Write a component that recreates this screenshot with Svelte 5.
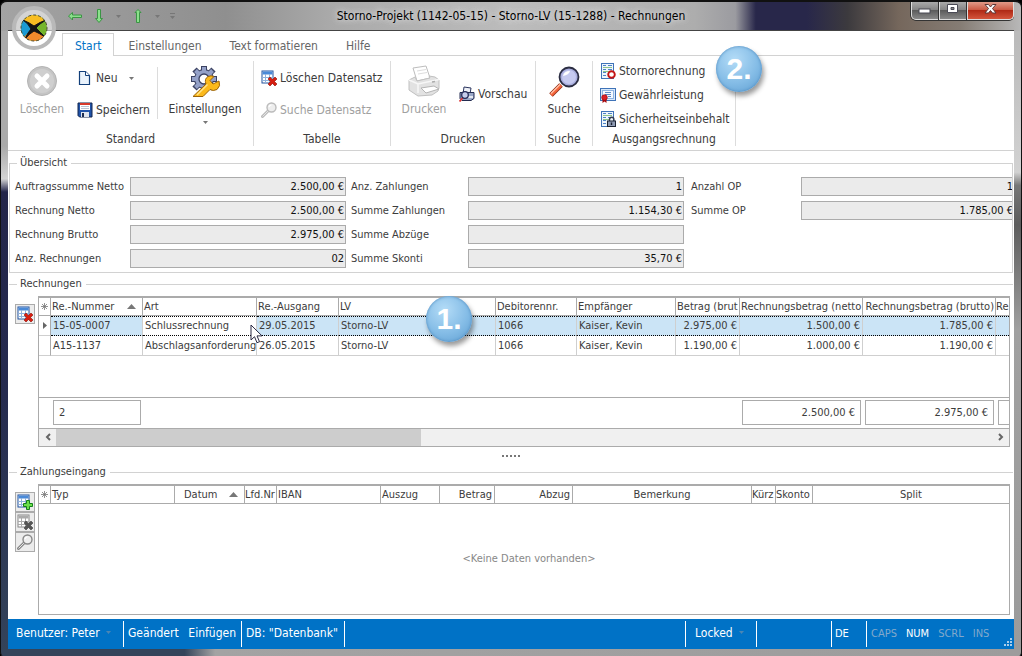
<script>
  let activeTab = 'Start';
  let selectedRow = 0;

  const tabs = ['Start', 'Einstellungen', 'Text formatieren', 'Hilfe'];

  // column by column, the last one is shorter
  const overview = [
    [
      { label: 'Auftragssumme Netto', value: '2.500,00 €' },
      { label: 'Rechnung Netto', value: '2.500,00 €' },
      { label: 'Rechnung Brutto', value: '2.975,00 €' },
      { label: 'Anz. Rechnungen', value: '02' },
    ],
    [
      { label: 'Anz. Zahlungen', value: '1' },
      { label: 'Summe Zahlungen', value: '1.154,30 €' },
      { label: 'Summe Abzüge', value: '' },
      { label: 'Summe Skonti', value: '35,70 €' },
    ],
    [
      { label: 'Anzahl OP', value: '1' },
      { label: 'Summe OP', value: '1.785,00 €' },
    ],
  ];

  const invoiceColumns = [
    { title: 'Re.-Nummer', cls: 'number', sorted: true, total: '2' },
    { title: 'Art', cls: 'kind' },
    { title: 'Re.-Ausgang', cls: 'date' },
    { title: 'LV', cls: 'lv' },
    { title: 'Debitorennr.', cls: 'debitor' },
    { title: 'Empfänger', cls: 'receiver' },
    { title: 'Betrag (brut', cls: 'amount', right: true },
    { title: 'Rechnungsbetrag (netto', cls: 'net', right: true, total: '2.500,00 €' },
    { title: 'Rechnungsbetrag (brutto)', cls: 'gross', right: true, total: '2.975,00 €' },
    { title: 'Re', cls: 'rest', total: ' ' },
  ];

  const invoices = [
    ['15-05-0007', 'Schlussrechnung', '29.05.2015', 'Storno-LV', '1066', 'Kaiser, Kevin', '2.975,00 €', '1.500,00 €', '1.785,00 €', ''],
    ['A15-1137', 'Abschlagsanforderung', '26.05.2015', 'Storno-LV', '1066', 'Kaiser, Kevin', '1.190,00 €', '1.000,00 €', '1.190,00 €', ''],
  ];

  const paymentColumns = [
    { title: 'Typ', cls: 'typ' },
    { title: 'Datum', cls: 'datum', center: true, sorted: true },
    { title: 'Lfd.Nr', cls: 'lfd' },
    { title: 'IBAN', cls: 'iban' },
    { title: 'Auszug', cls: 'auszug' },
    { title: 'Betrag', cls: 'betrag', right: true },
    { title: 'Abzug', cls: 'abzug', right: true },
    { title: 'Bemerkung', cls: 'bemerkung', center: true },
    { title: 'Kürz', cls: 'kuerzel' },
    { title: 'Skonto', cls: 'skonto' },
    { title: 'Split', cls: 'split', center: true },
  ];
</script>

{#snippet arrow()}
  <svg class="arrow" width="5" height="3" viewBox="0 0 5 3"><path d="M0 0h5L2.500 3z" fill="currentColor" /></svg>
{/snippet}

{#snippet star()}
  <svg width="7" height="7" viewBox="0 0 7 7"><path d="M3.500 0v7M0 3.500h7M1 1l5 5M6 1L1 6" stroke="#777" stroke-width=".8" /></svg>
{/snippet}

{#snippet tableIcon(kind)}
  <svg width="16" height="16" viewBox="0 0 16 16">
    <rect x="1" y="1" width="11" height="12" fill="#fff" stroke={kind === 'off' ? '#888' : '#23539e'} />
    <rect x="1.500" y="1.500" width="10" height="3" fill={kind === 'off' ? '#aaa' : '#4a8ad8'} />
    <path d="M1 7.500h11M1 10.500h11M4.500 4v9M8.500 4v9" stroke={kind === 'off' ? '#aaa' : '#8fb2dc'} fill="none" />
    {#if kind === 'add'}
      <path d="M9.500 6.500h3v3h3v3h-3v3h-3v-3h-3v-3h3z" fill="#6be04a" stroke="#14801a" />
    {:else}
      <path d="M7 9l2-2 2.500 2.500L14 7l2 2-2.500 2.500L16 14l-2 2-2.500-2.500L9 16l-2-2 2.500-2.500z" fill={kind === 'off' ? '#555' : '#d81e10'} stroke={kind === 'off' ? '#444' : '#8c1008'} stroke-width=".6" />
    {/if}
  </svg>
{/snippet}

{#snippet smallLens(color)}
  <svg width="16" height="16" viewBox="0 0 16 16">
    <path d="M7.500 8.500l-6 6" stroke={color} stroke-width="3" stroke-linecap="round" />
    <path d="M7 9l-5.500 5.500" stroke="#e4e4e4" stroke-width="1" />
    <circle cx="10.500" cy="5.500" r="4.500" fill="#eee" stroke={color} stroke-width="1.400" />
    <path d="M8 5q.5-2 2.500-2" stroke="#fff" stroke-width="1.200" fill="none" />
  </svg>
{/snippet}

{#snippet docIcon(kind)}
  <svg width="16" height="16" viewBox="0 0 16 16">
    {#if kind === 'warranty'}
      <rect x=".5" y="1.500" width="15" height="12" fill="#d9e9fa" stroke="#3f73b8" />
      <rect x="2.500" y="3.500" width="11" height="8" fill="#f5faff" stroke="#8fb5e2" />
      <path d="M5 5.500h6M5 7.500h6M8 9.500h3" stroke="#5b8bc9" />
      <path d="M2.500 11v5l2-1.500 2 1.500v-5z" fill="#a80c12" />
      <circle cx="4.500" cy="10.500" r="2.800" fill="#d8222a" stroke="#900" stroke-width=".6" />
    {:else}
      <rect x="1.500" y=".5" width="12" height="15" fill="#eef6fd" stroke="#3f73b8" />
      <path d="M3 2.500h3M8 2.500h4M3 6.500h3M8 6.500h4M3 9.500h3M3 12.500h3" stroke="#4e83c5" stroke-width="1" />
      <path d="M3 4.500h9M3 8.500h7" stroke="#8fc48a" stroke-width="1" />
      {#if kind === 'storno'}
        <circle cx="11.500" cy="11.500" r="3.300" fill="#fff" stroke="#c41414" stroke-width="1.900" />
      {:else}
        <path d="M9.500 10V8.500a2.200 2.200 0 0 1 4.400 0V10" fill="none" stroke="#333d52" stroke-width="1.400" />
        <rect x="7.500" y="10" width="8" height="5.500" fill="#8e9ab2" stroke="#1c2333" />
        <path d="M11.500 11.500v2.500" stroke="#1c2333" stroke-width="1.400" />
      {/if}
    {/if}
  </svg>
{/snippet}

{#snippet columnTitle(col)}
  <th class={col.cls} class:right={col.right} class:center={col.center} class:sorted={col.sorted}>
    {#if col.sorted}
      <span class="sort">{col.title}<svg width="9" height="5" viewBox="0 0 9 5"><path d="M4.500 0L9 5H0z" fill="#777" /></svg></span>
    {:else}
      {col.title}
    {/if}
  </th>
{/snippet}

<div class="window">
  <header class="titlebar">
    <div class="quick">
      <button aria-label="Zurück">
        <svg width="14" height="14" viewBox="0 0 14 14"><path d="M.5 7l4-3.500V6h9v2.500h-9v2.500z" fill="#8be08b" stroke="#3b9444" /></svg>
      </button>
      <button aria-label="Nach unten">
        <svg width="14" height="14" viewBox="0 0 14 14"><path d="M7 13.500L3.500 9.500h2V.5h3v9h2z" fill="#8be08b" stroke="#3b9444" /></svg>
      </button>
      {@render arrow()}
      <button aria-label="Nach oben">
        <svg width="14" height="14" viewBox="0 0 14 14"><path d="M7 .5L10 3.500H8.500v10h-3v-10H4z" fill="#8be08b" stroke="#3b9444" /></svg>
      </button>
      {@render arrow()}
      <svg class="arrow" width="5" height="6" viewBox="0 0 5 6"><path d="M0 0h5v1H0zM0 3h5L2.500 6z" fill="currentColor" /></svg>
    </div>
    <h1>Storno-Projekt (1142-05-15) - Storno-LV (15-1288) - Rechnungen</h1>
    <div class="controls">
      <button aria-label="Minimieren">
        <svg width="13" height="12" viewBox="0 0 13 12"><rect x="1" y="6" width="11" height="4" fill="#fff" stroke="#4a4a55" /></svg>
      </button>
      <button aria-label="Maximieren">
        <svg width="13" height="12" viewBox="0 0 13 12"><path d="M1.500 1.500h10v8h-10zM5 4.500v2h3v-2z" fill="#fff" fill-rule="evenodd" stroke="#4a4a55" /></svg>
      </button>
      <button class="close" aria-label="Schließen">
        <svg width="13" height="12" viewBox="0 0 13 12"><path d="M1 1.500h3.500L6.500 4l2-2.500H12L8.500 5.500 12 10H8.500l-2-2.500-2 2.500H1l3.500-4.500z" fill="#fff" stroke="#5c3838" /></svg>
      </button>
    </div>
    <button class="orb" aria-label="Menü">
      <svg width="46" height="46" viewBox="0 0 46 46">
        <circle cx="23" cy="23" r="20" fill="#fff" fill-opacity=".55" stroke="#b9b9b9" stroke-width="4" />
        <clipPath id="ball"><circle cx="23" cy="23" r="13" /></clipPath>
        <g clip-path="url(#ball)">
          <rect x="10" y="10" width="26" height="26" fill="#75b52b" />
          <path d="M12 8h21v7L22 23 12 15z" fill="#f8bd22" />
          <path d="M9 14l4 1 9 8-9 9-4 1z" fill="#1c9ad2" />
          <path d="M13 32l9-9 13 9v6H12z" fill="#f28a2c" />
          <path d="M12 15q7 3 11 6 6-4 12-6-7 4-10 8 5 5 9 9-6-4-11-6-5 3-9 8 3-7 6-10-3-6-8-9z" fill="#151515" stroke="#151515" stroke-width="1" />
        </g>
        <circle cx="23" cy="23" r="13" fill="none" stroke="#4b4b33" stroke-width="1" stroke-dasharray="3 2" />
      </svg>
    </button>
  </header>

  <div class="client">
    <nav class="tabs">
      {#each tabs as tab}
        <button class:active={tab === activeTab} on:click={() => (activeTab = tab)}>{tab}</button>
      {/each}
    </nav>

    <div class="ribbon">
      <section class="group standard">
        <div class="tools">
          <button class="large" disabled>
            <svg width="32" height="32" viewBox="0 0 32 32">
              <circle cx="16" cy="16" r="14.500" fill="#c4c4c4" stroke="#b4b4b4" />
              <circle cx="16" cy="16" r="12" fill="#cfcfcf" />
              <path d="M11 11l10 10M21 11L11 21" stroke="#fff" stroke-width="5" stroke-linecap="round" />
            </svg>
            Löschen
          </button>
          <div class="stack">
            <button class="small">
              <svg width="16" height="16" viewBox="0 0 16 16">
                <path d="M2.500 1.500h6l4 4v9h-10z" fill="#eaf3fc" stroke="#123f7a" stroke-width="1.200" />
                <path d="M8.500 1.500v4h4" fill="#fff" stroke="#123f7a" />
              </svg>
              Neu <span class="drop">{@render arrow()}</span>
            </button>
            <button class="small">
              <svg width="16" height="16" viewBox="0 0 16 16">
                <path d="M1 1h14v14H2.500L1 13.500z" fill="#2053a8" stroke="#12264e" />
                <rect x="3" y="1" width="10" height="7" fill="#fff" />
                <rect x="3" y="1" width="10" height="2" fill="#d83a2c" />
                <path d="M4 4.500h8M4 6.500h8" stroke="#b9c4d4" />
                <rect x="4" y="10" width="8" height="5" fill="#dfe5ee" />
                <rect x="5" y="11" width="2" height="4" fill="#1b2c50" />
              </svg>
              Speichern
            </button>
          </div>
          <div class="divider"></div>
          <button class="large">
            <svg width="32" height="32" viewBox="0 0 32 32">
              <!-- teeth, each one a short thick spoke -->
              <g stroke="#3b4262" stroke-width="6">
                <path d="M15 1v26M2 14h26M5.500 4.500l19 19M24.500 4.500l-19 19" />
              </g>
              <circle cx="15" cy="14" r="10" fill="#3b4262" />
              <g stroke="#94a1c8" stroke-width="4">
                <path d="M15 2v24M3 14h24M6.500 5.500l17 17M23.500 5.500l-17 17" />
              </g>
              <circle cx="15" cy="14" r="9" fill="#94a1c8" />
              <circle cx="15" cy="14" r="5" fill="#fff" stroke="#3b4262" stroke-width="1.300" />
              <path d="M4 31.500L17 19q-2-5 2-7.500 3-1.500 6 0l-4 4 3 3.500 6-3q2 5-2 8.500-4 2-7 0l-7 7z" fill="#fbb91b" stroke="#9c6408" />
              <path d="M8 30l10.500-10.500" stroke="#ffe48a" stroke-width="1.500" />
            </svg>
            Einstellungen
            {@render arrow()}
          </button>
        </div>
        <h2>Standard</h2>
      </section>

      <section class="group tabelle">
        <div class="tools">
          <div class="stack">
            <button class="small">{@render tableIcon('delete')} Löschen Datensatz</button>
            <button class="small" disabled>{@render smallLens('#bbb')} Suche Datensatz</button>
          </div>
        </div>
        <h2>Tabelle</h2>
      </section>

      <section class="group drucken">
        <div class="tools">
          <button class="large" disabled>
            <svg width="32" height="32" viewBox="0 0 32 32">
              <path d="M5 3l13-2 4 12-13 3z" fill="#fff" stroke="#bdbdbd" />
              <path d="M9 6l9-1.500M10 9l9-1.500" stroke="#ddd" />
              <path d="M1 15l6-3 2 4 13-3-1-2 6 1 4 3v8l-1 3-6 4-14 1-9-6z" fill="#e2e2e2" stroke="#c0c0c0" />
              <path d="M1 15l9 4 21-4.500M10 19v9" fill="none" stroke="#f7f7f7" stroke-width="1.500" />
              <path d="M13 23l13-2 5 3-13 4z" fill="#fff" stroke="#b4b4b4" />
              <path d="M24 17l3-.5" stroke="#aaa" stroke-width="1.500" />
            </svg>
            Drucken
          </button>
          <button class="small preview">
            <svg width="16" height="16" viewBox="0 0 16 16">
              <path d="M5 1l7 1-1 6H4z" fill="#eef1f8" stroke="#2b355e" />
              <path d="M1 6.500h14v6l-3 2H3l-2-2z" fill="#9ba8c8" stroke="#232b50" />
              <path d="M9 11h5" stroke="#fff" stroke-width="1.500" />
              <path d="M4 11.500L.5 15.500" stroke="#d33" stroke-width="1.800" />
              <circle cx="6" cy="9" r="3.300" fill="#c6cdec" stroke="#252b58" stroke-width="1.300" />
            </svg>
            Vorschau
          </button>
        </div>
        <h2>Drucken</h2>
      </section>

      <section class="group suche">
        <div class="tools">
          <button class="large">
            <svg width="32" height="32" viewBox="0 0 32 32">
              <path d="M13 20L3 30" stroke="#8a2b14" stroke-width="5" />
              <path d="M13 20L3 30" stroke="#f4653c" stroke-width="3.400" />
              <path d="M12 19.500L3 28.500" stroke="#ffc3a8" stroke-width="1.200" />
              <circle cx="21" cy="12" r="9.500" fill="#a9aede" stroke="#2b2d42" stroke-width="1.800" />
              <circle cx="21" cy="12" r="7" fill="#c6caf0" />
              <path d="M15 11q1-5 7-5-1 4-7 5z" fill="#fff" />
            </svg>
            Suche
          </button>
        </div>
        <h2>Suche</h2>
      </section>

      <section class="group ausgang">
        <div class="tools">
          <div class="stack tight">
            <button class="small">{@render docIcon('storno')} Stornorechnung</button>
            <button class="small">{@render docIcon('warranty')} Gewährleistung</button>
            <button class="small">{@render docIcon('lock')} Sicherheitseinbehalt</button>
          </div>
        </div>
        <h2>Ausgangsrechnung</h2>
        <span class="callout two">2.</span>
      </section>
    </div>

    <main>
      <fieldset class="overview">
        <legend>Übersicht</legend>
        <div class="fields">
          {#each overview as column, c}
            <div class="column">
              {#each column as field, r}
                <label for="f{c}{r}">{field.label}</label>
                <input id="f{c}{r}" value={field.value} readonly />
              {/each}
            </div>
          {/each}
        </div>
      </fieldset>

      <fieldset>
        <legend>Rechnungen</legend>
        <div class="panel">
          <div class="side">
            <button aria-label="Rechnung löschen">{@render tableIcon('delete')}</button>
          </div>
          <div class="grid">
            <table>
              <thead>
                <tr>
                  <th class="marker">{@render star()}</th>
                  {#each invoiceColumns as col}
                    {@render columnTitle(col)}
                  {/each}
                </tr>
              </thead>
              <tbody>
                {#each invoices as invoice, i}
                  <tr class:selected={i === selectedRow} on:click={() => (selectedRow = i)}>
                    <td class="marker">
                      {#if i === selectedRow}
                        <svg width="4" height="7" viewBox="0 0 4 7"><path d="M0 0l4 3.500L0 7z" fill="#666" /></svg>
                      {/if}
                    </td>
                    {#each invoice as value, c}
                      <td class={invoiceColumns[c].cls} class:right={invoiceColumns[c].right}>{value}</td>
                    {/each}
                  </tr>
                {/each}
                <tr class="filler"><td colspan="11"></td></tr>
              </tbody>
              <tfoot>
                <tr>
                  <td></td>
                  {#each invoiceColumns as col}
                    <td>
                      {#if col.total}
                        <div class="total" class:right={col.right}>{col.total}</div>
                      {/if}
                    </td>
                  {/each}
                </tr>
              </tfoot>
            </table>
            <div class="scrollbar">
              <button aria-label="Nach links"><svg width="6" height="8" viewBox="0 0 6 8"><path d="M5 1L2 4l3 3" fill="none" stroke="#666" stroke-width="2" /></svg></button>
              <div class="track"><div class="thumb"></div></div>
              <button aria-label="Nach rechts"><svg width="6" height="8" viewBox="0 0 6 8"><path d="M1 1l3 3-3 3" fill="none" stroke="#666" stroke-width="2" /></svg></button>
            </div>
            <span class="callout one">1.</span>
            <svg class="cursor" width="13" height="20" viewBox="0 0 13 20">
              <path d="M1 1v15l3.500-3.300 2.500 6 2.500-1-2.500-5.800h5z" fill="#fff" stroke="#2b2b45" />
            </svg>
          </div>
        </div>
      </fieldset>

      <div class="splitter"><i></i><i></i><i></i><i></i><i></i></div>

      <fieldset class="payments">
        <legend>Zahlungseingang</legend>
        <div class="panel">
          <div class="side">
            <button aria-label="Zahlung hinzufügen">{@render tableIcon('add')}</button>
            <button aria-label="Zahlung löschen" disabled>{@render tableIcon('off')}</button>
            <button aria-label="Zahlung suchen" disabled>{@render smallLens('#888')}</button>
          </div>
          <div class="grid">
            <table>
              <thead>
                <tr>
                  <th class="marker">{@render star()}</th>
                  {#each paymentColumns as col}
                    {@render columnTitle(col)}
                  {/each}
                </tr>
              </thead>
            </table>
            <p class="empty">&lt;Keine Daten vorhanden&gt;</p>
          </div>
        </div>
      </fieldset>
    </main>

    <footer>
      <span class="user">Benutzer: Peter {@render arrow()}</span>
      <span class="mode"><span>Geändert</span><span>Einfügen</span></span>
      <span class="db">DB: "Datenbank"</span>
      <span class="space"></span>
      <span class="locked">Locked {@render arrow()}</span>
      <span class="blank"></span>
      <span class="lang">DE</span>
      <span class="keys"><span>CAPS</span><b>NUM</b><span>SCRL</span><span>INS</span></span>
      <svg class="grip" width="10" height="10" viewBox="0 0 10 10"><path d="M7 1h2v2H7zM4 4h2v2H4zM7 4h2v2H7zM1 7h2v2H1zM4 7h2v2H4zM7 7h2v2H7z" fill="#a9cdea" /></svg>
    </footer>
  </div>
</div>

<style>
  :global(body) {
    margin: 0;
    background: #000;
  }

  .window, .window button, .window input {
    font-family: "DejaVu Sans Condensed", "DejaVu Sans", "Noto Sans", sans-serif;
    font-size: 11px;
    color: #3c3c3c;
  }
  .window {
    box-sizing: border-box;
    display: flex;
    flex-direction: column;
    min-height: 100vh;
    padding: 0 7px 8px;
    border: 1px solid #111;
    border-top-width: 2px;
    border-bottom: 0;
    border-radius: 7px 7px 5px 5px;
    background:
      linear-gradient(90deg, #a3a3a3, #8f8f8f 22%, #a9a9a9 32%, #bcbcbc 50%, #adadad 68%, #9b9ba0 72%, #28274a 74%, #28274a 79%, #3c3a3e 83%, #75675c 88%, #857c74 94%, #b8b8b8) top / 100% 29px no-repeat,
      linear-gradient(90deg, #34445a, #34445a 18%, #a3a3a3 21%, #9c9c9c) bottom / 100% 8px no-repeat,
      linear-gradient(#aaa 22%, #d4d4d4 27%, #23254a 29%, #252b4f 60%, #34445a) left / 8px 100% no-repeat,
      linear-gradient(#bbb 6%, #d2d2d2 26%, #777 28%, #5c5c5c 34%, #a0a0a0 50%, #9b9b9b) #999;
  }
  button {
    padding: 0;
    border: 0;
    background: none;
  }
  svg {
    flex: none;
  }
  h1, h2, p {
    margin: 0;
    font-weight: normal;
  }

  .titlebar {
    position: relative;
    display: flex;
    justify-content: space-between;
    height: 28px;
  }
  .quick {
    display: flex;
    align-items: center;
    gap: 10px;
    width: 240px;
    padding-left: 60px;
    color: #777;
  }
  .quick button {
    height: 14px;
  }
  .titlebar h1 {
    padding: 0 8px;
    font-size: 12px;
    line-height: 28px;
    color: #000;
    text-shadow: 0 0 6px #ddd, 0 0 6px #ddd;
    white-space: nowrap;
  }
  .controls {
    display: flex;
    justify-content: flex-end;
    width: 300px;
    height: 18px;
  }
  .controls button {
    width: 28px;
    border: 1px solid #ddd;
    border-top: 0;
    background: linear-gradient(#aaa, #858585 45%, #5c5c5c 50%, #888);
    box-shadow: 0 1px 0 #333, -1px 0 0 #333;
  }
  .controls button:first-child {
    border-bottom-left-radius: 5px;
  }
  .controls .close {
    width: 47px;
    border-bottom-right-radius: 5px;
    background: linear-gradient(#e09a88, #cb5b45 45%, #b02a16 50%, #d4553c);
  }
  .orb {
    position: absolute;
    top: 3px;
    left: 3px;
    width: 46px;
    height: 46px;
  }

  .client {
    flex: 1;
    display: flex;
    flex-direction: column;
    border-top: 1px solid #444;
    background: #fff;
  }
  .tabs {
    display: flex;
    height: 25px;
    padding-left: 54px;
    box-sizing: border-box;
    border-bottom: 1px solid #d2d2d2;
  }
  .tabs button {
    height: 23px;
    margin-top: 2px;
    padding: 2px 14px 0;
    font-size: 12px;
    color: #666;
  }
  .tabs .active {
    padding: 1px 12px 0;
    border: 1px solid #d2d2d2;
    border-bottom: 0;
    background: #fff;
    color: #0072c6;
  }

  .ribbon {
    display: flex;
    height: 95px;
    box-sizing: border-box;
    border-bottom: 1px solid #d2d2d2;
  }
  .group {
    position: relative;
    display: flex;
    flex-direction: column;
    box-sizing: border-box;
    margin: 5px 0 4px;
    border-right: 1px solid #dcdcdc;
  }
  .group h2 {
    font-size: 12px;
    line-height: 14px;
    text-align: center;
  }
  .standard { width: 246px; }
  .tabelle { width: 137px; }
  .drucken { width: 145px; }
  .suche { width: 57px; }
  .ausgang { width: 143px; }
  .tools {
    display: flex;
    height: 73px;
  }
  .large {
    display: flex;
    flex-direction: column;
    align-items: center;
    height: 62px;
    margin-top: 4px;
  }
  .window .large, .window .small {
    font-size: 12px;
    line-height: 24px;
    white-space: nowrap;
  }
  .window button:disabled {
    color: #a0a0a0;
  }
  .standard .large { width: 68px; }
  .standard .divider + .large { width: 94px; }
  .drucken .large { width: 66px; }
  .suche .large { width: 56px; }
  .divider {
    height: 52px;
    margin-top: 6px;
    border-right: 1px solid #dcdcdc;
  }
  .stack {
    display: flex;
    flex-direction: column;
    padding-top: 1px;
  }
  .small {
    display: flex;
    align-items: center;
    gap: 3px;
    height: 32px;
  }
  .tight {
    margin-top: -3px;
  }
  .tight .small {
    height: 24px;
    padding-left: 7px;
  }
  .tabelle .small {
    padding-left: 7px;
  }
  .standard .stack {
    width: 80px;
    padding-left: 1px;
  }
  .drop {
    display: flex;
    padding-left: 8px;
  }
  .arrow {
    color: #777;
  }
  .preview {
    height: 66px;
    padding-left: 2px;
  }

  .callout {
    position: absolute;
    width: 46px;
    height: 46px;
    border-radius: 50%;
    background: radial-gradient(circle at 40% 30%, #b4dcf7, #84bce6 55%, #5c9cd0);
    box-shadow: 2px 4px 5px #0006, inset 0 0 3px #4a86bb;
    font: bold 30px/46px "Liberation Sans", Arial, sans-serif;
    color: #fff;
    text-align: center;
  }
  .two {
    top: -15px;
    left: 123px;
  }
  .one {
    top: -1px;
    left: 387px;
  }

  main {
    flex: 1;
    display: flex;
    flex-direction: column;
    padding: 5px 1px 4px;
  }
  fieldset {
    min-width: 0;
    margin: 0;
    padding: 5px 3px 0 6px;
    border: 0;
    border-top: 1px solid #d2d2d2;
  }
  legend {
    margin-left: 2px;
    padding: 0 4px 0 3px;
    line-height: 14px;
  }
  .overview {
    margin-bottom: 4px;
    padding: 7px 0 4px 5px;
    border: 1px solid #d2d2d2;
    overflow: hidden;
  }
  .fields {
    display: grid;
    grid-template-columns: minmax(331px, 1fr) minmax(333px, 1fr) minmax(326px, 1fr);
    gap: 5px;
  }
  .column {
    display: grid;
    grid-template-columns: 115px 1fr;
    grid-auto-rows: 19px;
    align-content: start;
    align-items: center;
    gap: 5px 0;
  }
  .column:nth-child(2) {
    grid-template-columns: 117px 1fr;
  }
  .column:nth-child(3) {
    grid-template-columns: 110px 1fr;
    padding-left: 2px;
  }
  .column input {
    box-sizing: border-box;
    width: 100%;
    min-width: 0;
    height: 19px;
    padding: 0 1px;
    border: 1px solid #ababab;
    background: #ebebeb;
    color: #111;
    text-align: right;
  }

  .panel {
    display: flex;
    gap: 3px;
  }
  .side {
    display: flex;
    flex-direction: column;
    padding-top: 8px;
  }
  .side button {
    display: grid;
    place-items: center;
    box-sizing: border-box;
    width: 20px;
    height: 20px;
    border: 1px solid #ababab;
    background: #ececec;
  }
  .grid {
    position: relative;
    flex: 1;
    min-width: 0;
    border: 1px solid #ababab;
  }
  table {
    width: 100%;
    table-layout: fixed;
    border-spacing: 0;
  }
  th, td {
    box-sizing: border-box;
    height: 20px;
    padding: 0 2px;
    border: solid #cfcfcf;
    border-width: 0 1px 1px 0;
    font-weight: normal;
    line-height: 17px;
    text-align: left;
    white-space: nowrap;
    overflow: hidden;
  }
  th {
    height: 19px;
    padding: 0 1px;
    border-color: #ababab;
    border-top: 1px solid #ababab;
  }
  th:last-child, tbody td:last-child {
    border-right: 0;
  }
  .marker {
    width: 12px;
    padding: 0;
    border-right-color: #ababab;
    text-align: center;
  }
  .right { text-align: right; }
  .center { text-align: center; }
  .number { width: 92px; }
  .kind { width: 114px; }
  .date { width: 82px; }
  .debitor { width: 81px; }
  .receiver { width: 99px; }
  .amount { width: 64px; }
  .net { width: 123px; }
  .gross { width: 133px; }
  .rest { width: 13px; }
  .typ { width: 124px; }
  .datum { width: 70px; }
  .lfd { width: 32px; }
  .iban { width: 104px; }
  .auszug { width: 59px; }
  .betrag { width: 55px; }
  .abzug { width: 78px; }
  .bemerkung { width: 179px; }
  .kuerzel { width: 24px; }
  .skonto { width: 37px; }
  th.amount, th.net {
    text-align: left;
  }
  th.rest, th.skonto, th.lfd, th.kuerzel {
    padding: 0;
  }
  th.betrag, th.abzug {
    padding-right: 2px;
  }
  .sort {
    display: flex;
    align-items: center;
    justify-content: space-between;
    padding-right: 5px;
  }
  .datum .sort {
    padding-left: 8px;
  }
  .selected td:not(.marker) {
    border-top: 1px dotted #000;
    border-bottom: 1px dotted #000;
    background: #cbe4f6;
    line-height: 16px;
  }
  .selected td.kind {
    background: #fff;
  }
  .filler td {
    height: 42px;
    border-right: 0;
    border-color: #ababab;
  }
  tfoot td {
    height: 30px;
    padding: 2px 2px 3px;
    border: 0;
  }
  .total {
    box-sizing: border-box;
    width: 100%;
    height: 25px;
    padding: 0 5px;
    border: 1px solid #ababab;
    line-height: 24px;
  }
  tfoot td:last-child {
    padding-right: 0;
  }
  tfoot td:last-child .total {
    border-right: 0;
  }
  .scrollbar {
    display: flex;
    height: 17px;
    border-top: 1px solid #ababab;
    background: #f0f0f0;
  }
  .scrollbar button {
    width: 17px;
  }
  .track {
    flex: 1;
  }
  .thumb {
    width: 39%;
    height: 100%;
    background: #cdcdcd;
  }
  .cursor {
    position: absolute;
    top: 27px;
    left: 211px;
  }

  .splitter {
    display: flex;
    align-items: center;
    justify-content: center;
    gap: 2px;
    height: 18px;
  }
  .splitter i {
    width: 2px;
    height: 2px;
    background: #777;
  }
  .payments {
    flex: 1;
  }
  .payments .panel {
    min-height: 131px;
  }
  .empty {
    margin-top: 48px;
    padding-left: 10px;
    line-height: 14px;
    color: #888;
    text-align: center;
  }

  footer {
    position: relative;
    display: flex;
    height: 30px;
    background: #0072c6;
    color: #fff;
    font-size: 12px;
    line-height: 24px;
  }
  footer > span {
    display: flex;
    align-items: center;
    box-sizing: border-box;
    height: 26px;
    margin-top: 2px;
    padding-left: 4px;
    padding-bottom: 3px;
    border-right: 1px solid #fff;
    white-space: nowrap;
  }
  footer .arrow {
    margin-left: 6px;
    color: #4c86b4;
  }
  footer .user {
    width: 116px;
    padding-left: 8px;
  }
  .mode {
    justify-content: space-between;
    width: 118px;
    padding-right: 5px;
  }
  .db { width: 103px; }
  .space { flex: 1; }
  footer .locked {
    width: 71px;
    padding-left: 9px;
  }
  .blank { width: 75px; }
  footer .lang {
    width: 35px;
    padding: 0 0 0 3px;
    font-size: 11px;
  }
  footer .keys {
    gap: 9px;
    width: 147px;
    padding-bottom: 0;
    border: 0;
    font-size: 11px;
    color: #82a9cb;
  }
  .keys b {
    font-weight: normal;
    color: #fff;
  }
  .grip {
    position: absolute;
    right: 1px;
    bottom: 2px;
  }
</style>
